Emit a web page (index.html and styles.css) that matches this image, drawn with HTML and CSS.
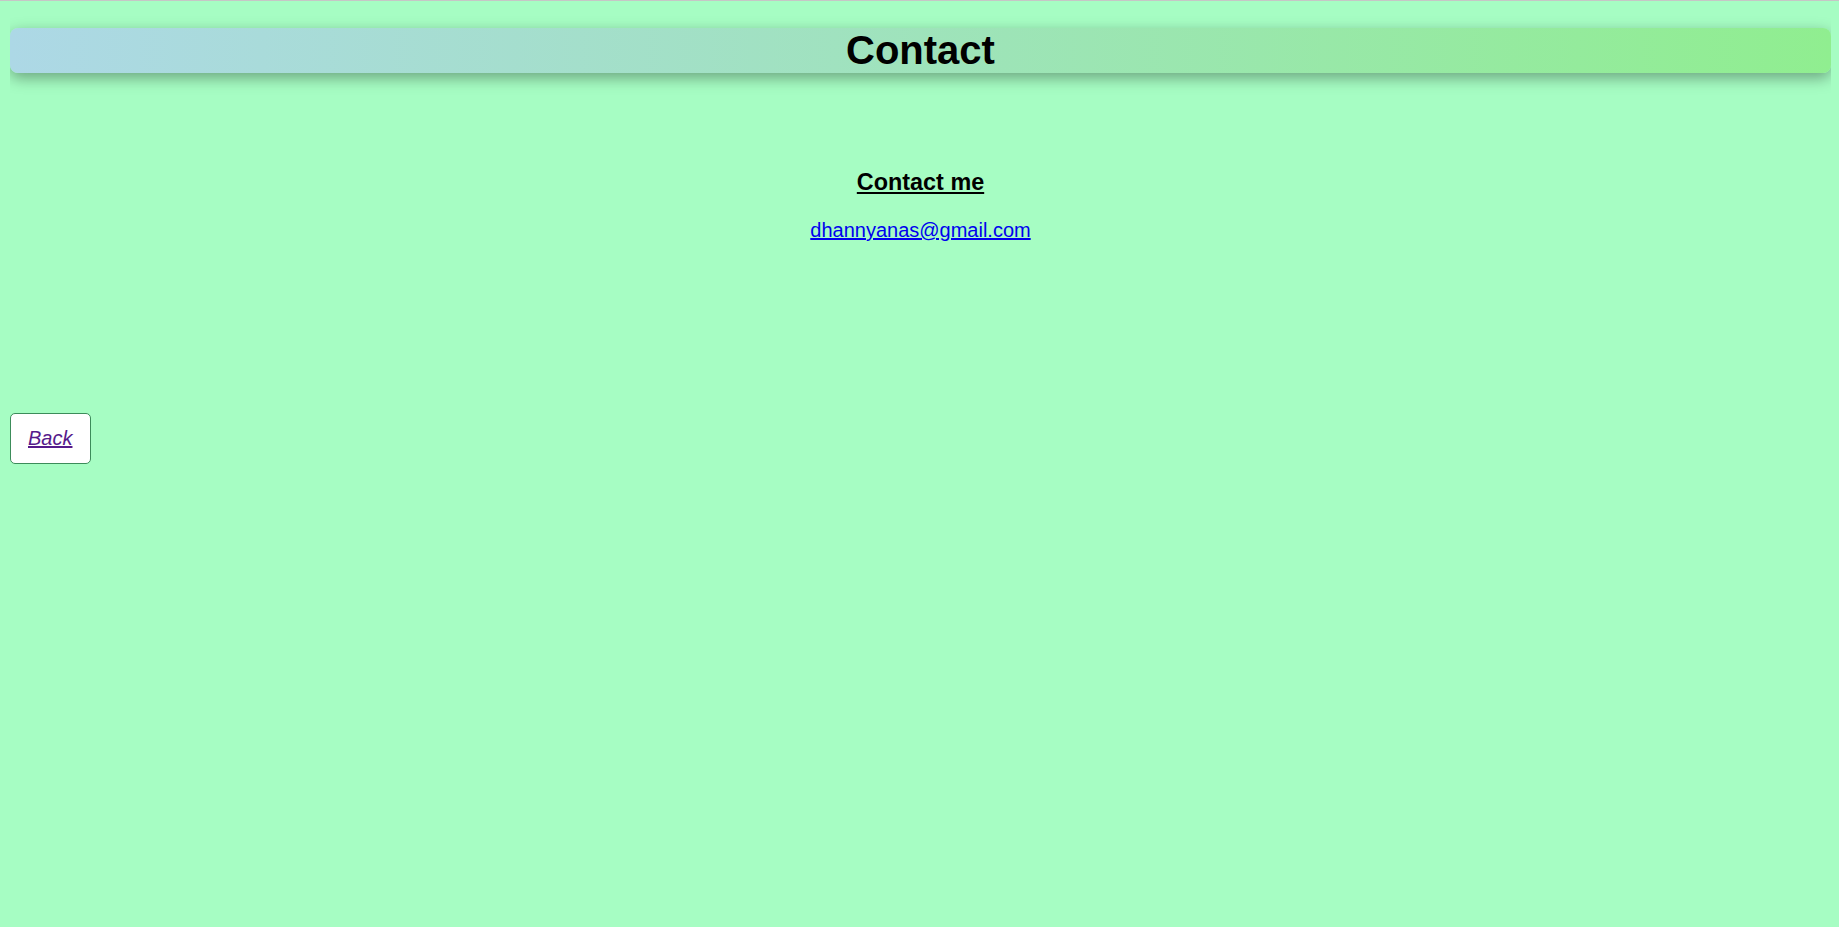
FILE: index.html
```html
<!DOCTYPE html>
<html lang="en">
<head>
<meta charset="utf-8">
<title>Contact</title>
<link rel="stylesheet" href="styles.css">
</head>
<body>
<h1 class="title">Contact</h1>
<section class="contact">
  <h3 class="contact-heading">Contact me</h3>
  <p class="contact-mail"><a class="mail-link" href="mailto:dhannyanas@gmail.com">dhannyanas@gmail.com</a></p>
</section>
<div class="back"><a class="back-link" href="#">Back</a></div>
</body>
</html>
```
FILE: styles.css
```css
html {
  border-top: 1px solid #c6c6c6;
  background: #a6fdc3;
}
body {
  margin: 0 8px 0 10px;
  font-family: "Liberation Sans", Arial, sans-serif;
  font-size: 20px;
  background: #a6fdc3;
}
.title {
  margin: 27px 0 0;
  font-size: 40px;
  line-height: 45px;
  text-align: center;
  font-weight: bold;
  color: #000;
  border-radius: 8px;
  background: linear-gradient(to right, #add8e6, #90ee90);
  box-shadow: 0 5px 15px rgba(0, 0, 0, 0.35);
}
.contact {
  padding-top: 73px;
  text-align: center;
}
.contact-heading {
  margin: 23px 0 0;
  font-size: 23.4px;
  font-weight: bold;
  text-decoration: underline;
}
.contact-mail {
  margin: 23px 0 0;
}
.mail-link {
  color: #0000ee;
}
.back {
  display: inline-block;
  margin-top: 171px;
  padding: 13px 18px 13px 17px;
  background: #fff;
  border: 1px solid #3c8c5a;
  border-radius: 5px;
}
.back-link {
  color: #551a8b;
  font-style: italic;
}
```
